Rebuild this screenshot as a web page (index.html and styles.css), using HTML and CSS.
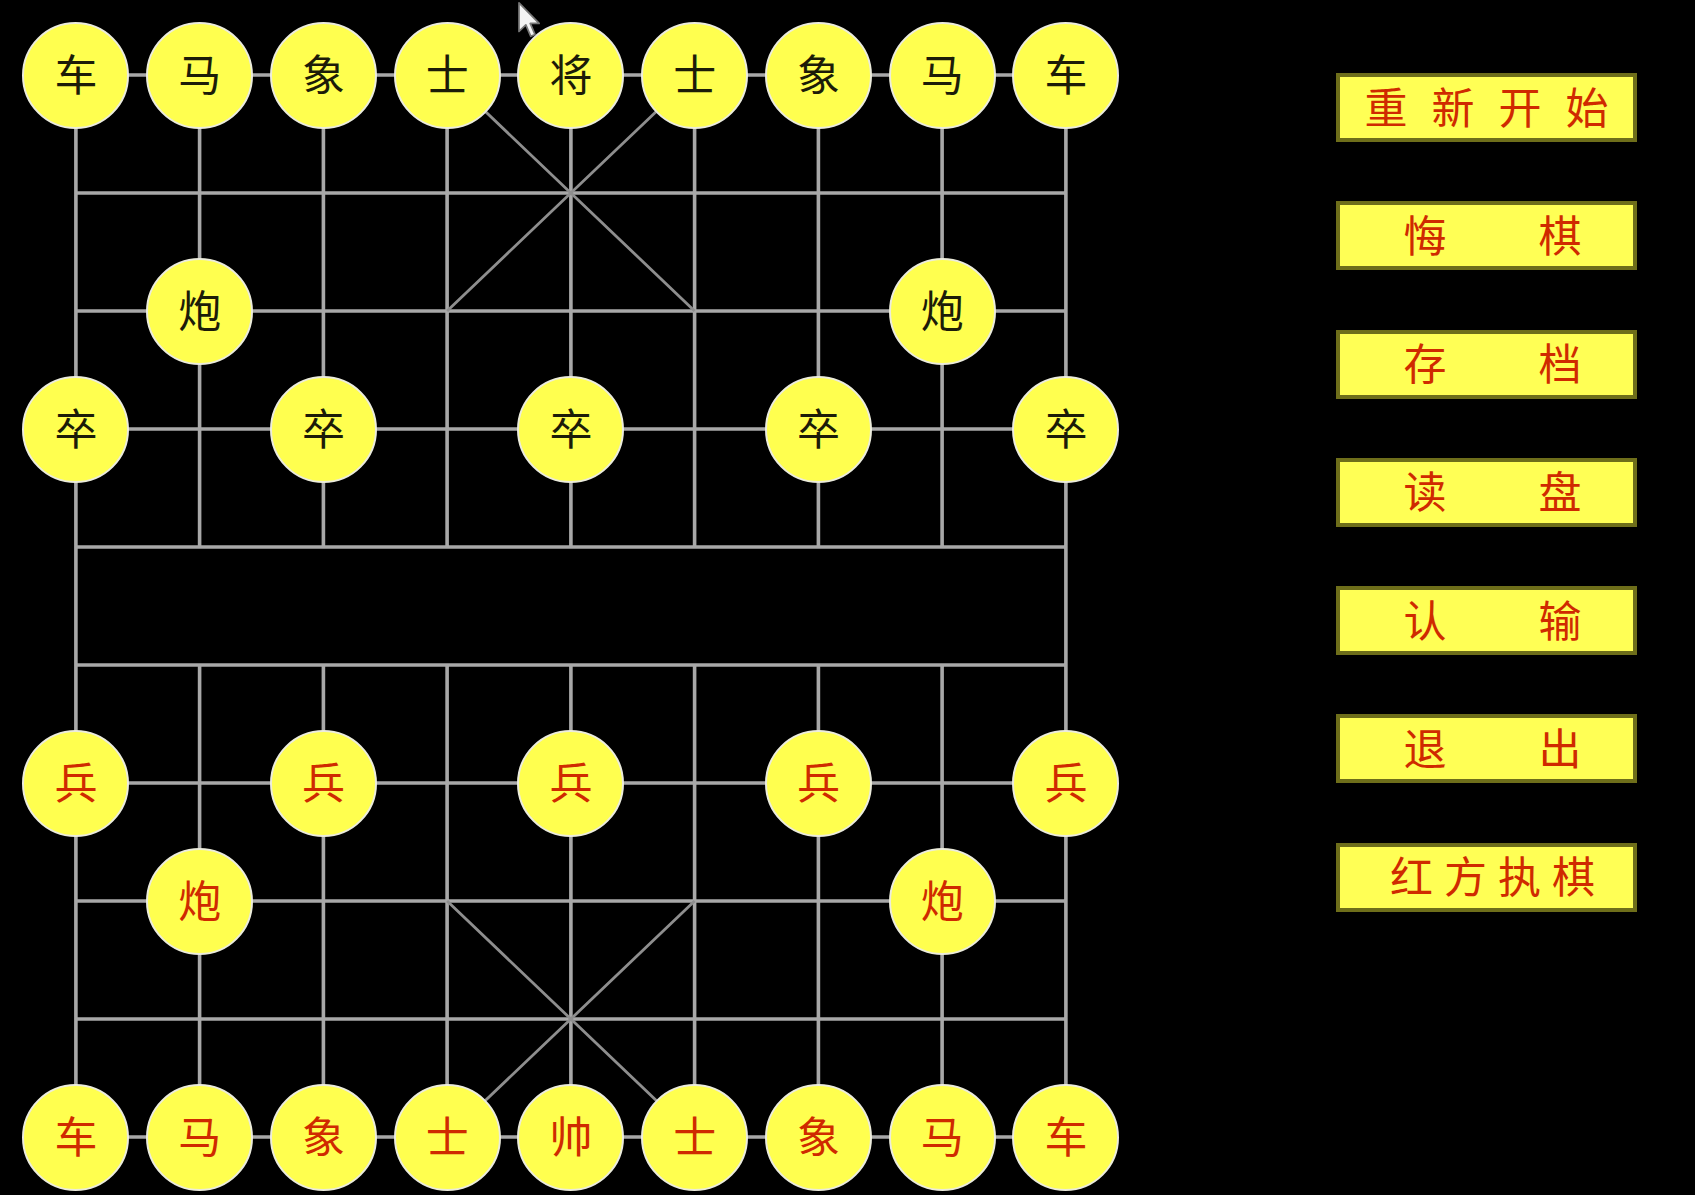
FILE: index.html
```html
<!DOCTYPE html>
<html lang="zh-CN">
<head>
<meta charset="utf-8">
<title>中国象棋</title>
<link rel="stylesheet" href="styles.css">
</head>
<body>
<div class="app">
  <div class="board">
    <svg class="lines" viewBox="0 0 1114 1180" width="1114" height="1180">
      <path class="grid" d="M61.9 59H1051.9 M61.9 177H1051.9 M61.9 295H1051.9 M61.9 413H1051.9 M61.9 531H1051.9 M61.9 649H1051.9 M61.9 767H1051.9 M61.9 885H1051.9 M61.9 1003H1051.9 M61.9 1121H1051.9 M61.9 59V1121 M1051.9 59V1121 M185.6 59V531 M309.4 59V531 M433.1 59V531 M556.9 59V531 M680.6 59V531 M804.4 59V531 M928.1 59V531 M185.6 649V1121 M309.4 649V1121 M433.1 649V1121 M556.9 649V1121 M680.6 649V1121 M804.4 649V1121 M928.1 649V1121"/>
      <path class="diag" d="M433.1 59L680.6 295 M680.6 59L433.1 295 M433.1 885L680.6 1121 M680.6 885L433.1 1121"/>
    </svg>
    <div class="pieces">
      <div class="piece black c0 r0">车</div>
      <div class="piece black c1 r0">马</div>
      <div class="piece black c2 r0">象</div>
      <div class="piece black c3 r0">士</div>
      <div class="piece black c4 r0">将</div>
      <div class="piece black c5 r0">士</div>
      <div class="piece black c6 r0">象</div>
      <div class="piece black c7 r0">马</div>
      <div class="piece black c8 r0">车</div>
      <div class="piece black c1 r2">炮</div>
      <div class="piece black c7 r2">炮</div>
      <div class="piece black c0 r3">卒</div>
      <div class="piece black c2 r3">卒</div>
      <div class="piece black c4 r3">卒</div>
      <div class="piece black c6 r3">卒</div>
      <div class="piece black c8 r3">卒</div>
      <div class="piece red c0 r6">兵</div>
      <div class="piece red c2 r6">兵</div>
      <div class="piece red c4 r6">兵</div>
      <div class="piece red c6 r6">兵</div>
      <div class="piece red c8 r6">兵</div>
      <div class="piece red c1 r7">炮</div>
      <div class="piece red c7 r7">炮</div>
      <div class="piece red c0 r9">车</div>
      <div class="piece red c1 r9">马</div>
      <div class="piece red c2 r9">象</div>
      <div class="piece red c3 r9">士</div>
      <div class="piece red c4 r9">帅</div>
      <div class="piece red c5 r9">士</div>
      <div class="piece red c6 r9">象</div>
      <div class="piece red c7 r9">马</div>
      <div class="piece red c8 r9">车</div>
    </div>
  </div>
  <div class="panel">
    <div class="btn btn-wide"><span>重</span><span>新</span><span>开</span><span>始</span></div>
    <div class="btn btn-pair"><span>悔</span><span>棋</span></div>
    <div class="btn btn-pair"><span>存</span><span>档</span></div>
    <div class="btn btn-pair"><span>读</span><span>盘</span></div>
    <div class="btn btn-pair"><span>认</span><span>输</span></div>
    <div class="btn btn-pair"><span>退</span><span>出</span></div>
    <div class="btn btn-tight"><span>红</span><span>方</span><span>执</span><span>棋</span></div>
  </div>
</div>
<svg class="cursor" viewBox="0 0 12 20" width="23" height="38">
  <path d="M1 1V16L4.6 12.6L7.2 18.6L9.4 17.6L6.9 11.8H11.6Z" fill="#f4f4f4" stroke="#777" stroke-width="0.9" stroke-linejoin="round"/>
</svg>
</body>
</html>
```

FILE: styles.css
```css
html, body {
  margin: 0;
  padding: 0;
  background: #000;
}

body {
  width: 1695px;
  height: 1195px;
  overflow: hidden;
  position: relative;
  font-family: "Noto Sans CJK SC", "Noto Sans", sans-serif;
}

.app {
  display: flex;
  align-items: flex-start;
  padding: 16px 0 0 14px;
}

.board {
  position: relative;
  width: 1114px;
  height: 1180px;
  flex: none;
}

.lines {
  position: absolute;
  left: 0;
  top: 0;
}

.grid {
  fill: none;
  stroke: #a8a8a8;
  stroke-width: 3.6;
}

.diag {
  fill: none;
  stroke: #8e8e8e;
  stroke-width: 2.8;
}

.pieces {
  position: relative;
  display: grid;
  grid-template-columns: repeat(9, 123.75px);
  grid-template-rows: repeat(10, 118px);
}

.piece {
  width: 107px;
  height: 107px;
  box-sizing: border-box;
  border-radius: 50%;
  background: #ffff4f;
  border: 2px solid #ececdc;
  place-self: center;
  display: flex;
  align-items: center;
  justify-content: center;
  padding-bottom: 5px;
  font-size: 43px;
  font-weight: 400;
  line-height: 1;
}

.black { color: #1c1c08; }
.red { color: #cf2a00; }

.c0 { grid-column: 1; }
.c1 { grid-column: 2; }
.c2 { grid-column: 3; }
.c3 { grid-column: 4; }
.c4 { grid-column: 5; }
.c5 { grid-column: 6; }
.c6 { grid-column: 7; }
.c7 { grid-column: 8; }
.c8 { grid-column: 9; }

.r0 { grid-row: 1; }
.r2 { grid-row: 3; }
.r3 { grid-row: 4; }
.r6 { grid-row: 7; }
.r7 { grid-row: 8; }
.r9 { grid-row: 10; }

.panel {
  margin-left: 208px;
  margin-top: 57px;
  display: flex;
  flex-direction: column;
  gap: 59.3px;
  flex: none;
}

.btn {
  width: 301px;
  height: 69px;
  box-sizing: border-box;
  background: #ffff55;
  border: 4px solid #6e6e1a;
  display: flex;
  align-items: center;
  justify-content: center;
  padding-bottom: 5px;
  color: #cf2a00;
  font-size: 43px;
  font-weight: 400;
  line-height: 1;
}

.btn-wide { gap: 24px; }
.btn-pair { gap: 92px; padding-left: 12px; }
.btn-tight { gap: 11px; padding-left: 12px; }

.cursor {
  position: absolute;
  left: 517px;
  top: 1px;
}
```
